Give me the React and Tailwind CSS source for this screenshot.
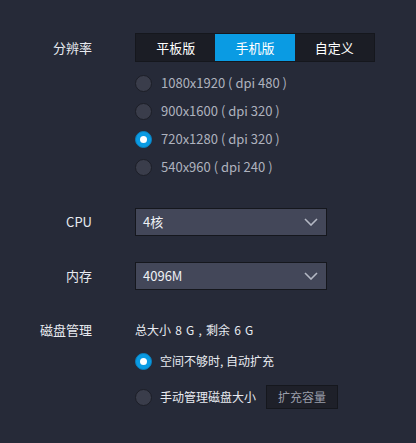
import React, { useState } from 'react';

const Radio = ({ checked }) => (
    <span
        className={`w-[17px] h-[17px] rounded-full border flex items-center justify-center shrink-0 ${
            checked ? 'bg-[#0a9be3] border-[#0a7fbd]' : 'bg-[#3a3d4b] border-[#1c1e27]'
        }`}
    >
        {checked && <span className="w-[7px] h-[7px] rounded-full bg-white" />}
    </span>
);

const Chevron = () => (
    <svg width="14" height="8" viewBox="0 0 14 8" fill="none">
        <path d="M1 1l6 6 6-6" stroke="#b4b8c4" strokeWidth="1.6" />
    </svg>
);

const Select = ({ value }) => (
    <div className="w-[192px] h-[28px] bg-[#434759] border border-[#15171d] flex items-center justify-between pl-[7px] pr-[8px] text-[13px] text-[#eef0f4]">
        <span>{value}</span>
        <Chevron />
    </div>
);

const App = () => {
    const [mode, setMode] = useState(1);
    const [res, setRes] = useState(2);
    const [disk, setDisk] = useState(0);

    const tabs = ['平板版', '手机版', '自定义'];
    const resolutions = [
        '1080x1920 ( dpi 480 )',
        '900x1600 ( dpi 320 )',
        '720x1280 ( dpi 320 )',
        '540x960 ( dpi 240 )',
    ];

    return (
        <div
            className="w-[416px] h-[443px] bg-[#262a38] text-[#e8eaf0] pt-[33px]"
            style={{ fontFamily: '"Noto Sans CJK SC", "Noto Sans", sans-serif' }}
        >
            {/* resolution */}
            <div className="flex">
                <div className="w-[92px] text-right text-[13px] leading-[29px]">分辨率</div>
                <div className="ml-[43px]">
                    <div className="flex border border-[#15171d] bg-[#1b1d25] w-[240px] h-[29px]">
                        {tabs.map((t, i) => (
                            <button
                                key={t}
                                onClick={() => setMode(i)}
                                className={`w-[80px] h-full text-[13px] text-white ${mode === i ? 'bg-[#0a9be3]' : ''}`}
                            >
                                {t}
                            </button>
                        ))}
                    </div>
                    <div className="mt-[7px]">
                        {resolutions.map((r, i) => (
                            <div
                                key={r}
                                onClick={() => setRes(i)}
                                className="h-[28px] flex items-center gap-[9px] text-[13px] text-[#aeb2be] cursor-pointer"
                            >
                                <Radio checked={res === i} />
                                <span>{r}</span>
                            </div>
                        ))}
                    </div>
                </div>
            </div>

            {/* cpu */}
            <div className="flex items-center mt-[27px]">
                <div className="w-[92px] text-right text-[13px]">CPU</div>
                <div className="ml-[43px]">
                    <Select value="4核" />
                </div>
            </div>

            {/* memory */}
            <div className="flex items-center mt-[26px]">
                <div className="w-[92px] text-right text-[13px]">内存</div>
                <div className="ml-[43px]">
                    <Select value="4096M" />
                </div>
            </div>

            {/* disk */}
            <div className="flex mt-[31px]">
                <div className="w-[92px] text-right text-[13px] leading-[18px]">磁盘管理</div>
                <div className="ml-[43px] text-[12px]">
                    <div className="leading-[18px] text-[#e8eaf0] [word-spacing:1.5px]">总大小 8 G , 剩余 6 G</div>
                    <div
                        onClick={() => setDisk(0)}
                        className="mt-[8px] h-[28px] flex items-center gap-[8px] cursor-pointer"
                    >
                        <Radio checked={disk === 0} />
                        <span>空间不够时, 自动扩充</span>
                    </div>
                    <div
                        onClick={() => setDisk(1)}
                        className="mt-[8px] h-[28px] flex items-center gap-[8px] cursor-pointer"
                    >
                        <Radio checked={disk === 1} />
                        <span>手动管理磁盘大小</span>
                        <button className="ml-[2px] w-[72px] h-[24px] bg-[#1e2029] border border-[#15171d] text-[#9a9eaa] text-[12px]">
                            扩充容量
                        </button>
                    </div>
                </div>
            </div>
        </div>
    );
};

export default App;
